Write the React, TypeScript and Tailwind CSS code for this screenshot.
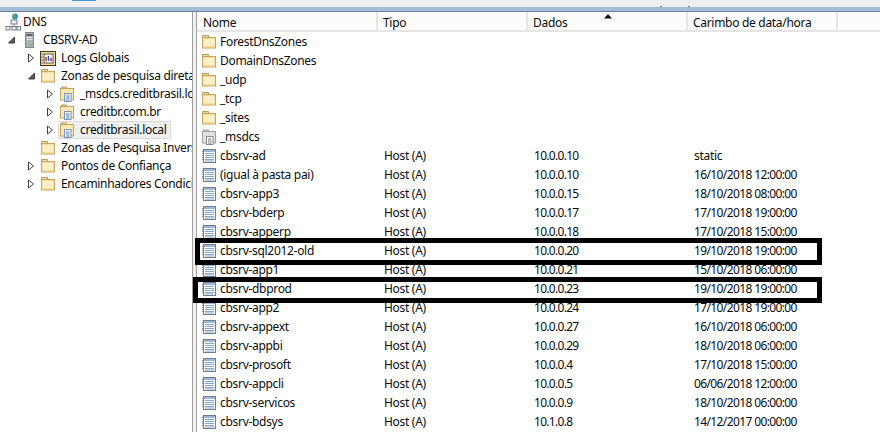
import React from 'react';

const font = { fontFamily: '"Noto Sans", "Open Sans", sans-serif' };

interface DnsRow {
  name: string;
  type?: string;
  data?: string;
  stamp?: string;
  icon: 'folder' | 'zone' | 'record';
}

const rows: DnsRow[] = [
  { name: 'ForestDnsZones', icon: 'folder' },
  { name: 'DomainDnsZones', icon: 'folder' },
  { name: '_udp', icon: 'folder' },
  { name: '_tcp', icon: 'folder' },
  { name: '_sites', icon: 'folder' },
  { name: '_msdcs', icon: 'zone' },
  { name: 'cbsrv-ad', type: 'Host (A)', data: '10.0.0.10', stamp: 'static', icon: 'record' },
  { name: '(igual à pasta pai)', type: 'Host (A)', data: '10.0.0.10', stamp: '16/10/2018 12:00:00', icon: 'record' },
  { name: 'cbsrv-app3', type: 'Host (A)', data: '10.0.0.15', stamp: '18/10/2018 08:00:00', icon: 'record' },
  { name: 'cbsrv-bderp', type: 'Host (A)', data: '10.0.0.17', stamp: '17/10/2018 19:00:00', icon: 'record' },
  { name: 'cbsrv-apperp', type: 'Host (A)', data: '10.0.0.18', stamp: '17/10/2018 15:00:00', icon: 'record' },
  { name: 'cbsrv-sql2012-old', type: 'Host (A)', data: '10.0.0.20', stamp: '19/10/2018 19:00:00', icon: 'record' },
  { name: 'cbsrv-app1', type: 'Host (A)', data: '10.0.0.21', stamp: '15/10/2018 06:00:00', icon: 'record' },
  { name: 'cbsrv-dbprod', type: 'Host (A)', data: '10.0.0.23', stamp: '19/10/2018 19:00:00', icon: 'record' },
  { name: 'cbsrv-app2', type: 'Host (A)', data: '10.0.0.24', stamp: '17/10/2018 19:00:00', icon: 'record' },
  { name: 'cbsrv-appext', type: 'Host (A)', data: '10.0.0.27', stamp: '16/10/2018 06:00:00', icon: 'record' },
  { name: 'cbsrv-appbi', type: 'Host (A)', data: '10.0.0.29', stamp: '18/10/2018 06:00:00', icon: 'record' },
  { name: 'cbsrv-prosoft', type: 'Host (A)', data: '10.0.0.4', stamp: '17/10/2018 15:00:00', icon: 'record' },
  { name: 'cbsrv-appcli', type: 'Host (A)', data: '10.0.0.5', stamp: '06/06/2018 12:00:00', icon: 'record' },
  { name: 'cbsrv-servicos', type: 'Host (A)', data: '10.0.0.9', stamp: '18/10/2018 06:00:00', icon: 'record' },
  { name: 'cbsrv-bdsys', type: 'Host (A)', data: '10.1.0.8', stamp: '14/12/2017 00:00:00', icon: 'record' },
];

function FolderIcon() {
  return (
    <svg width="16" height="16" viewBox="0 0 16 16" className="shrink-0">
      <path d="M1.5 3.5V1.5h6v2" fill="#f3dca0" stroke="#b59a5a" />
      <rect x="1.5" y="3.5" width="13" height="10.5" fill="#f6dc94" stroke="#c2a562" />
      <rect x="2.5" y="5" width="11" height="8" fill="#fdf0c6" />
      <rect x="2" y="12.5" width="12" height="1.5" fill="#e8c878" />
    </svg>
  );
}

function ZoneIcon({ gray }: { gray?: boolean }) {
  return (
    <svg width="16" height="16" viewBox="0 0 16 16" className="shrink-0">
      <path d="M2.5 2.5V1h5v1.5" fill={gray ? '#d8d8d8' : '#f3dca0'} stroke={gray ? '#9a9a9a' : '#b59a5a'} />
      <rect x="1.5" y="2.5" width="13" height="11.5" fill={gray ? '#e2e2e2' : '#f8e7b4'} stroke={gray ? '#9f9f9f' : '#c2a562'} />
      <rect x="5.5" y="7.5" width="6.5" height="8" fill="#ffffff" stroke={gray ? '#8a8a8a' : '#7c93b4'} />
      <path d="M7 10h3.5M7 12h3.5M7 14h3.5" stroke={gray ? '#777777' : '#3b78c4'} />
    </svg>
  );
}

function RecordIcon() {
  return (
    <svg width="14" height="16" viewBox="0 0 14 16" className="shrink-0">
      <rect x="1.5" y="1.5" width="12" height="13" fill="#ffffff" stroke="#6f7d8c" />
      <rect x="2" y="2" width="11" height="2" fill="#9db8d8" />
      <path d="M3 5.5h9M3 7.5h9M3 9.5h9M3 11.5h9M3 13h9" stroke="#86a6cc" />
      <path d="M0.5 3v10" stroke="#8a96a3" strokeDasharray="1 1" />
    </svg>
  );
}

function DnsIcon() {
  return (
    <svg width="16" height="18" viewBox="0 0 16 18" className="shrink-0">
      <circle cx="10" cy="3.5" r="3" fill="#3f8fc9" />
      <path d="M8 2.5l2-1 1 2-2 1.5z" fill="#5fa84a" />
      <rect x="6" y="7" width="6" height="4" fill="#eef0f2" stroke="#77808a" />
      <path d="M9 11v2M2.5 13.5h13" stroke="#77808a" />
      <rect x="1" y="13.5" width="4" height="3.5" fill="#eef0f2" stroke="#77808a" />
      <rect x="7" y="13.5" width="4" height="3.5" fill="#eef0f2" stroke="#77808a" />
      <rect x="12" y="13.5" width="3.5" height="3.5" fill="#eef0f2" stroke="#77808a" />
    </svg>
  );
}

function ServerIcon() {
  return (
    <svg width="9" height="16" viewBox="0 0 9 16" className="shrink-0">
      <rect x="0.5" y="0.5" width="8" height="15" fill="#aab2b8" stroke="#7e868c" />
      <rect x="1.5" y="2" width="6" height="2" fill="#5d666d" />
      <rect x="1.5" y="5" width="6" height="1" fill="#e4e7e9" />
      <rect x="1.5" y="7" width="6" height="1" fill="#e4e7e9" />
      <rect x="5" y="12" width="2" height="2" fill="#4fd04f" />
    </svg>
  );
}

function LogIcon() {
  return (
    <svg width="16" height="16" viewBox="0 0 16 16" className="shrink-0">
      <rect x="0.5" y="1.5" width="15" height="14" fill="#f5dc8c" stroke="#3a3a2a" />
      <rect x="4" y="4" width="9" height="9" fill="#ffffff" stroke="#555555" />
      <path d="M6 11V7" stroke="#d03030" strokeWidth="1.5" />
      <path d="M8.5 11V6" stroke="#3050c0" strokeWidth="1.5" />
      <path d="M11 11V8" stroke="#7030a0" strokeWidth="1.5" />
      <path d="M1.5 4h1M1.5 7h1M1.5 10h1M1.5 13h1" stroke="#333333" />
    </svg>
  );
}

function Caret({ open }: { open?: boolean }) {
  return (
    <svg width="9" height="10" viewBox="0 0 9 10" className="shrink-0">
      {open ? (
        <path d="M0.5 8h6V2z" fill="#595959" stroke="#404040" />
      ) : (
        <path d="M0.5 1v8l5-4z" fill="#ffffff" stroke="#444444" />
      )}
    </svg>
  );
}

function TreeRow({
  indent,
  caret,
  icon,
  label,
  selected,
}: {
  indent: string;
  caret?: 'open' | 'closed';
  icon: React.ReactNode;
  label: string;
  selected?: boolean;
}) {
  return (
    <div className={`flex h-[18px] items-center ${indent}`}>
      <span className="flex w-[12px] shrink-0 items-center">
        {caret && <Caret open={caret === 'open'} />}
      </span>
      <div
        className={`flex h-[18px] items-center gap-[5px] whitespace-nowrap pr-[4px] ${
          selected ? '-ml-[1px] bg-[#f0f0f0] pl-[1px] outline outline-[#d9d9d9] -outline-offset-1' : ''
        }`}
      >
        {icon}
        <span>{label}</span>
      </div>
    </div>
  );
}

export default function App() {
  return (
    <div className="relative flex h-[432px] w-[880px] flex-col overflow-hidden bg-white text-[12px] tracking-[-0.3px] text-[#0b0b0b]" style={font}>
      {/* Window chrome strip */}
      <div className="relative h-[7px] shrink-0 bg-[#f0f0f0]">
        <div className="absolute left-[72px] top-0 h-[1px] w-[24px] bg-[#3e9bd8]" />
        <div className="absolute left-[660px] top-[6px] h-[1px] w-[2px] bg-[#7a7a7a]" />
        <div className="absolute left-[688px] top-[6px] h-[1px] w-[2px] bg-[#7a7a7a]" />
      </div>
      <div className="h-[5px] shrink-0 border-b border-[#6d8299] bg-[#a3bcd8]" />

      <div className="flex min-h-0 flex-1 bg-[#f0f0f0]">
        {/* Tree */}
        <div className="w-[193px] shrink-0 overflow-hidden border-r border-[#a0a0a0] bg-white">
          <div className="mt-[1px] flex h-[18px] items-center gap-[2px] pl-[5px]">
            <DnsIcon />
            <span>DNS</span>
          </div>
          <TreeRow indent="pl-[8px]" caret="open" icon={<span className="ml-[5px] mr-[4px] flex"><ServerIcon /></span>} label="CBSRV-AD" />
          <TreeRow indent="pl-[28px]" caret="closed" icon={<LogIcon />} label="Logs Globais" />
          <TreeRow indent="pl-[28px]" caret="open" icon={<FolderIcon />} label="Zonas de pesquisa diretas" />
          <TreeRow indent="pl-[47px]" caret="closed" icon={<ZoneIcon />} label="_msdcs.creditbrasil.local" />
          <TreeRow indent="pl-[47px]" caret="closed" icon={<ZoneIcon />} label="creditbr.com.br" />
          <TreeRow indent="pl-[47px]" caret="closed" icon={<ZoneIcon />} label="creditbrasil.local" selected />
          <TreeRow indent="pl-[28px]" icon={<FolderIcon />} label="Zonas de Pesquisa Inversa" />
          <TreeRow indent="pl-[28px]" caret="closed" icon={<FolderIcon />} label="Pontos de Confiança" />
          <TreeRow indent="pl-[28px]" caret="closed" icon={<FolderIcon />} label="Encaminhadores Condicionais" />
        </div>

        {/* Record list */}
        <div className="ml-[3px] flex-1 overflow-hidden border-l border-[#a0a0a0] bg-white">
          <div className="relative flex h-[20px] items-center border-b-2 border-[#e5e5e5] bg-[#fcfcfc]">
            <div className="h-full w-[181px] shrink-0 border-r-2 border-[#e5e5e5] pl-[6px] leading-[21px]">Nome</div>
            <div className="h-full w-[150px] shrink-0 border-r-2 border-[#e5e5e5] pl-[5px] leading-[21px]">Tipo</div>
            <div className="h-full w-[160px] shrink-0 border-r-2 border-[#e5e5e5] pl-[5px] leading-[21px]">Dados</div>
            <div className="h-full w-[150px] shrink-0 border-r-2 border-[#e5e5e5] pl-[5px] leading-[21px]">Carimbo de data/hora</div>
            <svg width="8" height="5" viewBox="0 0 8 5" className="absolute left-[407px] top-[2px]">
              <path d="M4 0l4 4.5H0z" fill="#111111" />
            </svg>
          </div>
          <div>
            {rows.map((row) => (
              <div key={row.name} className="flex h-[19px] items-center whitespace-nowrap">
                <div className="flex w-[181px] shrink-0 items-center gap-[3px] pl-[4px]">
                  {row.icon === 'folder' && <FolderIcon />}
                  {row.icon === 'zone' && <ZoneIcon gray />}
                  {row.icon === 'record' && (
                    <span className="flex w-[16px] justify-center">
                      <RecordIcon />
                    </span>
                  )}
                  <span>{row.name}</span>
                </div>
                <div className="w-[150px] shrink-0 pl-[6px]">{row.type}</div>
                <div className="w-[160px] shrink-0 pl-[6px] tracking-[-0.7px]">{row.data}</div>
                <div className={`shrink-0 pl-[6px] ${row.stamp === 'static' ? '' : 'tracking-[-0.62px]'}`}>{row.stamp}</div>
              </div>
            ))}
          </div>
        </div>
      </div>

      {/* Hand-drawn highlight boxes over the screenshot */}
      <div className="absolute left-[195px] top-[238px] h-[27px] w-[627px] border-[5px] border-black" />
      <div className="absolute left-[193px] top-[277px] h-[26px] w-[629px] border-[5px] border-black" />
    </div>
  );
}
